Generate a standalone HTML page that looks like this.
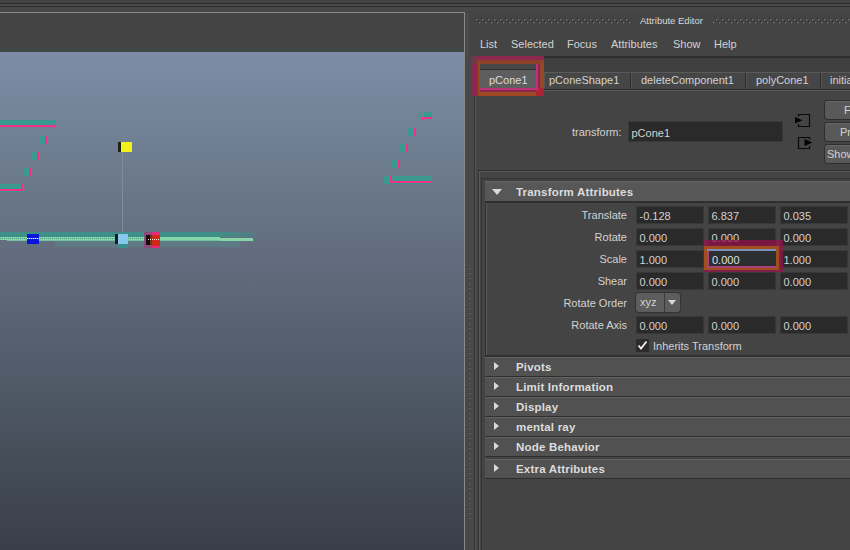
<!DOCTYPE html>
<html>
<head>
<meta charset="utf-8">
<title>Attribute Editor</title>
<style>
html,body{margin:0;padding:0;}
body{width:850px;height:550px;overflow:hidden;position:relative;background:#444444;font-family:"Liberation Sans",sans-serif;font-size:11px;color:#d2d2d2;}
.a{position:absolute;}
.t{position:absolute;white-space:nowrap;line-height:14px;height:14px;}
/* viewport */
#vp{left:0;top:52px;width:464px;height:498px;background:linear-gradient(to bottom,#808ba8 0px,#7c8ca3 6px,#393f48 498px);overflow:hidden;}
.teal{background:#3a9a90;}
.pink{background:#f2308c;}
/* fields */
.f{position:absolute;height:18px;width:68px;background:#2a2a2a;border-radius:2px;box-shadow:inset 0 0 0 1px #383838;}
.f span{position:absolute;left:3.5px;top:3px;line-height:14px;white-space:nowrap;}
.lbl{position:absolute;width:160px;text-align:right;left:467px;line-height:14px;white-space:nowrap;}
.hdr{position:absolute;left:485px;width:365px;height:19px;background:#515151;border-top:1px solid #626262;box-sizing:border-box;}
.hdr b{position:absolute;left:31px;top:2px;line-height:14px;font-size:11.5px;letter-spacing:.2px;white-space:nowrap;color:#dcdcdc;}
.tri-r{position:absolute;left:9px;top:3.5px;width:0;height:0;border-left:5.5px solid #d8d8d8;border-top:4.25px solid transparent;border-bottom:4.25px solid transparent;}
.tri-d{position:absolute;left:6.5px;top:6.5px;width:0;height:0;border-top:6px solid #d8d8d8;border-left:5px solid transparent;border-right:5px solid transparent;}
.btn{position:absolute;left:825px;width:40px;height:18px;background:#595959;border-radius:3px;box-shadow:0 0 0 1px #2e2e2e, inset 0 1px 0 #666;}
.tab{position:absolute;top:72px;height:16px;background:#464646;border-top:1px solid #5a5a5a;border-left:1px solid #555;border-right:1px solid #2c2c2c;}
</style>
</head>
<body>
<!-- top window chrome lines -->
<div class="a" style="left:0;top:3px;width:850px;height:1px;background:#2b2b2b"></div>
<div class="a" style="left:0;top:4px;width:850px;height:2px;background:#4b4b4b"></div>
<div class="a" style="left:0;top:6px;width:850px;height:1px;background:#2b2b2b"></div>
<div class="a" style="left:0;top:7px;width:850px;height:4px;background:#484848"></div>

<!-- viewport panel -->
<div class="a" style="left:0;top:12px;width:465px;height:1px;background:#8a8a8a"></div>
<div class="a" style="left:464px;top:12px;width:1px;height:538px;background:#8a8a8a"></div>
<div class="a" style="left:0;top:48px;width:464px;height:4px;background:#3e4744"></div>
<div class="a" id="vp">
  <!-- left stair shape (coords relative to vp: y-52) -->
  <div class="a teal" style="left:0;top:68px;width:56px;height:6px"></div>
  <div class="a pink" style="left:0;top:73px;width:55px;height:2px"></div>
  <div class="a pink" style="left:53px;top:73px;width:2px;height:3px"></div>
  <div class="a teal" style="left:40px;top:84px;width:5px;height:8px"></div>
  <div class="a pink" style="left:45px;top:84px;width:2px;height:8px"></div>
  <div class="a teal" style="left:32px;top:100px;width:5px;height:8px"></div>
  <div class="a pink" style="left:37px;top:100px;width:2px;height:8px"></div>
  <div class="a teal" style="left:24px;top:116px;width:5px;height:8px"></div>
  <div class="a pink" style="left:29px;top:116px;width:2px;height:8px"></div>
  <div class="a teal" style="left:0;top:132px;width:24px;height:8px"></div>
  <div class="a pink" style="left:0;top:137px;width:23px;height:2px"></div>
  <div class="a pink" style="left:21px;top:132px;width:2px;height:7px"></div>
  <!-- right stair shape -->
  <div class="a teal" style="left:424px;top:60px;width:8px;height:6px"></div>
  <div class="a teal" style="left:417px;top:60px;width:6px;height:7px;opacity:.35"></div>
  <div class="a pink" style="left:422px;top:65px;width:10px;height:2px"></div>
  <div class="a pink" style="left:422px;top:65px;width:2px;height:3px"></div>
  <div class="a teal" style="left:408px;top:76px;width:6px;height:8px"></div>
  <div class="a pink" style="left:414px;top:76px;width:2px;height:8px"></div>
  <div class="a teal" style="left:400px;top:92px;width:6px;height:8px"></div>
  <div class="a pink" style="left:406px;top:92px;width:2px;height:8px"></div>
  <div class="a teal" style="left:392px;top:108px;width:6px;height:8px"></div>
  <div class="a pink" style="left:398px;top:108px;width:2px;height:8px"></div>
  <div class="a teal" style="left:384px;top:124px;width:48px;height:8px"></div>
  <div class="a pink" style="left:390px;top:129px;width:42px;height:2px"></div>
  <div class="a pink" style="left:390px;top:124px;width:2px;height:7px"></div>
  <!-- yellow cube + line -->
  <div class="a" style="left:122px;top:100px;width:1px;height:81px;background:#828c92"></div>
  <div class="a" style="left:118px;top:90px;width:4px;height:10px;background:#1c2410"></div>
  <div class="a" style="left:121px;top:90px;width:11px;height:10px;background:#f2f21a"></div>
  <!-- bottom gizmo -->
  <div class="a" style="left:55px;top:189px;width:185px;height:6px;background:#5a8088;opacity:.7"></div>
  <div class="a" style="left:0;top:180px;width:256px;height:5px;background:linear-gradient(to right,#3d8f88 0,#3d8f88 215px,rgba(61,143,136,.45) 250px,rgba(61,143,136,.2) 256px)"></div>
  <div class="a" style="left:0;top:185px;width:220px;height:3px;background:#86d6aa"></div>
  <div class="a" style="left:7px;top:188px;width:213px;height:1px;background:#78bea0"></div>
  <div class="a" style="left:220px;top:186px;width:33px;height:3px;background:#86d6aa"></div>
  <div class="a" style="left:0;top:186px;width:152px;height:1px;background:repeating-linear-gradient(to right,#4a9a84 0 1px,transparent 1px 2px)"></div>
  <div class="a" style="left:27px;top:182px;width:12px;height:10px;background:#0a14d8"></div>
  <div class="a" style="left:27px;top:186px;width:12px;height:1px;background:repeating-linear-gradient(to right,#e8f0ff 0 1px,#5a78e8 1px 2px)"></div>
  <div class="a" style="left:118px;top:191px;width:10px;height:5px;background:#3a9088"></div>
  <div class="a" style="left:115px;top:182px;width:4px;height:10px;background:#10201e"></div>
  <div class="a" style="left:118px;top:182px;width:10px;height:10px;background:#86c8ee"></div>
  <div class="a" style="left:144px;top:180px;width:8px;height:16px;background:#8a4a7a"></div>
  <div class="a" style="left:146px;top:183px;width:4px;height:10px;background:#1a0a10"></div>
  <div class="a" style="left:150px;top:183px;width:2px;height:10px;background:#6a3a18"></div>
  <div class="a" style="left:152px;top:180px;width:8px;height:16px;background:#e8287a"></div>
  <div class="a" style="left:152px;top:183px;width:8px;height:11px;background:#d2281a"></div>
  <div class="a" style="left:148px;top:187px;width:12px;height:1px;background:repeating-linear-gradient(to right,#f4e8e0 0 1px,transparent 1px 2px)"></div>
</div>

<!-- attribute editor left strip -->
<div class="a" style="left:465px;top:13px;width:4px;height:44px;background:#4a4a4a"></div>
<div class="a" style="left:465px;top:57px;width:9px;height:493px;background:#484848"></div>
<div class="a" style="left:474px;top:57px;width:1px;height:493px;background:#323232"></div>
<div class="a" style="left:475px;top:58px;width:1px;height:492px;background:#565656"></div>
<div class="a" style="left:478px;top:170px;width:1px;height:380px;background:#363636"></div>
<div class="a" style="left:479px;top:171px;width:1px;height:379px;background:#585858"></div>
<div class="a" style="left:481px;top:178px;width:1px;height:372px;background:#343434"></div>
<svg class="a" style="left:468px;top:266px" width="3" height="254"><defs><pattern id="vd" x="0" y="0" width="3" height="5" patternUnits="userSpaceOnUse"><rect x="0" y="1" width="1" height="1" fill="#363636"/><rect x="1" y="2" width="1" height="1" fill="#6e6e6e"/><rect x="2" y="2" width="1" height="1" fill="#555"/></pattern></defs><rect width="3" height="254" fill="url(#vd)"/></svg>

<!-- title bar -->
<svg class="a" style="left:475px;top:17px" width="375" height="7"><defs><pattern id="hd" x="0" y="0" width="6" height="7" patternUnits="userSpaceOnUse"><rect x="0" y="1" width="1" height="1" fill="#303030"/><rect x="1" y="1" width="1" height="1" fill="#3c3c3c"/><rect x="0" y="2" width="1" height="1" fill="#3c3c3c"/><rect x="1" y="2" width="1" height="1" fill="#808080"/><rect x="2" y="2" width="1" height="1" fill="#545454"/><rect x="1" y="3" width="1" height="1" fill="#545454"/><rect x="3" y="4" width="1" height="1" fill="#303030"/><rect x="4" y="4" width="1" height="1" fill="#3c3c3c"/><rect x="3" y="5" width="1" height="1" fill="#3c3c3c"/><rect x="4" y="5" width="1" height="1" fill="#808080"/><rect x="5" y="5" width="1" height="1" fill="#545454"/><rect x="4" y="6" width="1" height="1" fill="#545454"/></pattern></defs><rect x="0" width="156" height="7" fill="url(#hd)"/><rect x="238" width="137" height="7" fill="url(#hd)"/></svg>
<div class="t" style="left:640px;top:14px;font-size:9.5px;color:#d8d8d8">Attribute Editor</div>

<!-- menu -->
<div class="t" style="left:480px;top:37px;">List</div>
<div class="t" style="left:511px;top:37px;">Selected</div>
<div class="t" style="left:567px;top:37px;">Focus</div>
<div class="t" style="left:611px;top:37px;">Attributes</div>
<div class="t" style="left:673px;top:37px;">Show</div>
<div class="t" style="left:714px;top:37px;">Help</div>

<!-- tab frame -->
<div class="a" style="left:475px;top:56px;width:375px;height:2px;background:#2e2e2e"></div>
<div class="a" style="left:477px;top:58px;width:373px;height:31px;background:#404040"></div>
<div class="a" style="left:477px;top:89px;width:373px;height:1px;background:#2c2c2c"></div>
<div class="a" style="left:477px;top:90px;width:373px;height:1px;background:#585858"></div>

<!-- tabs -->
<div class="tab" style="left:544px;width:85px"><div class="t" style="left:4px;top:0px">pConeShape1</div></div>
<div class="tab" style="left:631px;width:113px"><div class="t" style="left:9px;top:0px">deleteComponent1</div></div>
<div class="tab" style="left:746px;width:73px"><div class="t" style="left:9px;top:0px">polyCone1</div></div>
<div class="tab" style="left:821px;width:40px"><div class="t" style="left:8px;top:0px">initialShadingGroup</div></div>

<!-- highlighted tab -->
<div class="a" style="left:472px;top:56px;width:72px;height:40px;background:#8c2850"></div>
<div class="a" style="left:472px;top:56px;width:6px;height:8px;background:#703848"></div>
<div class="a" style="left:478px;top:60px;width:60px;height:28px;border-style:solid;border-color:#8c4128 #98482a #a04a24 #964b19;border-width:4px 4px 4px 2px"></div>
<div class="a" style="left:536px;top:88px;width:8px;height:8px;background:#ae2434"></div>
<div class="a" style="left:480px;top:64px;width:58px;height:26px;background:#be3278"></div>
<div class="a" style="left:480px;top:64px;width:56px;height:5px;background:#484848"></div>
<div class="a" style="left:480px;top:69px;width:56px;height:1px;background:#2c2c2c"></div>
<div class="a" style="left:480px;top:70px;width:56px;height:18px;background:#5e5e5e"></div>
<div class="t" style="left:489px;top:73px;color:#dcdcdc">pCone1</div>

<!-- transform row -->
<div class="t" style="left:572px;top:125px;">transform:</div>
<div class="f" style="left:628px;top:121px;width:155px;height:21px;"><span style="top:5px">pCone1</span></div>

<!-- icons -->
<svg class="a" style="left:794px;top:112px" width="20" height="40" viewBox="0 0 20 40">
  <path d="M4.5 4.5V2.5H15.5V14.5H4.5V12" fill="none" stroke="#0a0a0a" stroke-width="1.2"/>
  <path d="M1 5L8.5 8.3L1 11.6Z" fill="#050505"/>
  <path d="M15.500 27.500V25.500H4.5V36.5H15.500V34" fill="none" stroke="#0a0a0a" stroke-width="1.2"/>
  <path d="M10.500 27L18.500 30.500L10.500 34Z" fill="#050505"/>
</svg>

<!-- buttons -->
<div class="btn" style="top:101px"><div class="t" style="left:19px;top:2px">Focus</div></div>
<div class="btn" style="top:123px"><div class="t" style="left:15px;top:2px">Presets</div></div>
<div class="btn" style="top:145px"><div class="t" style="left:2px;top:2px">Show</div></div>

<!-- separators above section list -->
<div class="a" style="left:478px;top:170px;width:372px;height:1px;background:#2c2c2c"></div>
<div class="a" style="left:479px;top:171px;width:371px;height:1px;background:#5a5a5a"></div>
<div class="a" style="left:481px;top:178px;width:369px;height:1px;background:#333333"></div>
<div class="a" style="left:482px;top:179px;width:368px;height:2px;background:#404040"></div>

<!-- Transform Attributes -->
<div class="hdr" style="top:181px;height:20px;background:#575757"><i class="tri-d"></i><b style="top:3px">Transform Attributes</b></div>
<div class="a" style="left:485px;top:201px;width:365px;height:2px;background:#2e2e2e"></div>
<div class="a" style="left:485px;top:203px;width:1px;height:152px;background:#2e2e2e"></div>
<div class="a" style="left:486px;top:203px;width:1px;height:152px;background:#5a5a5a"></div>
<div class="a" style="left:485px;top:355px;width:365px;height:2px;background:#303030"></div>

<div class="lbl" style="top:208px">Translate</div>
<div class="lbl" style="top:230px">Rotate</div>
<div class="lbl" style="top:252px">Scale</div>
<div class="lbl" style="top:274px">Shear</div>
<div class="lbl" style="top:296px">Rotate Order</div>
<div class="lbl" style="top:318px">Rotate Axis</div>

<div class="f" style="left:636px;top:206px"><span>-0.128</span></div>
<div class="f" style="left:708px;top:206px"><span>6.837</span></div>
<div class="f" style="left:780px;top:206px"><span>0.035</span></div>
<div class="f" style="left:636px;top:228px"><span>0.000</span></div>
<div class="f" style="left:708px;top:228px"><span>0.000</span></div>
<div class="f" style="left:780px;top:228px"><span>0.000</span></div>
<div class="f" style="left:636px;top:250px"><span>1.000</span></div>
<div class="f" style="left:780px;top:250px"><span>1.000</span></div>
<div class="f" style="left:636px;top:272px"><span>0.000</span></div>
<div class="f" style="left:708px;top:272px"><span>0.000</span></div>
<div class="f" style="left:780px;top:272px"><span>0.000</span></div>
<div class="f" style="left:636px;top:316px"><span>0.000</span></div>
<div class="f" style="left:708px;top:316px"><span>0.000</span></div>
<div class="f" style="left:780px;top:316px"><span>0.000</span></div>

<!-- highlighted Scale Y -->
<div class="f" style="left:708px;top:250px"></div>
<div class="a" style="left:704px;top:240px;width:79px;height:6px;background:rgba(150,16,76,.72)"></div>
<div class="a" style="left:779px;top:246px;width:4px;height:26px;background:rgba(150,16,76,.72)"></div>
<div class="a" style="left:704px;top:270px;width:75px;height:2px;background:rgba(150,16,76,.72)"></div>
<div class="a" style="left:704px;top:246px;width:75px;height:24px;background:#a04e1e"></div>
<div class="a" style="left:707px;top:249px;width:69px;height:19px;background:#a8407a"></div>
<div class="a" style="left:707px;top:249px;width:69px;height:2px;background:#7a8fba"></div>
<div class="a" style="left:709px;top:251px;width:67px;height:14.5px;background:#2b2f2f"></div>
<div class="t" style="left:712px;top:253px;color:#e0e0e0">0.000</div>

<!-- rotate order dropdown -->
<div class="a" style="left:636px;top:293px;width:44px;height:19px;background:#5d5d5d;border-radius:3px;box-shadow:0 0 0 1px #333"></div>
<div class="a" style="left:664px;top:293px;width:1px;height:19px;background:#3a3a3a"></div>
<div class="t" style="left:640px;top:295px">xyz</div>
<div class="a" style="left:668px;top:300px;width:0;height:0;border-top:5px solid #d8d8d8;border-left:4px solid transparent;border-right:4px solid transparent"></div>

<!-- checkbox -->
<div class="a" style="left:636px;top:339px;width:13px;height:13px;background:#2b2b2b"></div>
<svg class="a" style="left:636px;top:339px" width="13" height="13" viewBox="0 0 13 13"><path d="M2.500 6.500L5 9.500L10.500 2.500" fill="none" stroke="#f0f0f0" stroke-width="1.800"/></svg>
<div class="t" style="left:653px;top:339px">Inherits Transform</div>

<!-- collapsed sections -->
<div class="hdr" style="top:357px"><i class="tri-r"></i><b>Pivots</b></div>
<div class="a" style="left:485px;top:376px;width:365px;height:1px;background:#2e2e2e"></div>
<div class="hdr" style="top:377px"><i class="tri-r"></i><b>Limit Information</b></div>
<div class="a" style="left:485px;top:396px;width:365px;height:1px;background:#2e2e2e"></div>
<div class="hdr" style="top:397px"><i class="tri-r"></i><b>Display</b></div>
<div class="a" style="left:485px;top:416px;width:365px;height:1px;background:#2e2e2e"></div>
<div class="hdr" style="top:417px"><i class="tri-r"></i><b>mental ray</b></div>
<div class="a" style="left:485px;top:436px;width:365px;height:1px;background:#2e2e2e"></div>
<div class="hdr" style="top:437px"><i class="tri-r"></i><b>Node Behavior</b></div>
<div class="a" style="left:485px;top:456px;width:365px;height:1px;background:#2e2e2e"></div>
<div class="hdr" style="top:459px"><i class="tri-r"></i><b>Extra Attributes</b></div>
<div class="a" style="left:485px;top:478px;width:365px;height:1px;background:#2e2e2e"></div>
</body>
</html>
